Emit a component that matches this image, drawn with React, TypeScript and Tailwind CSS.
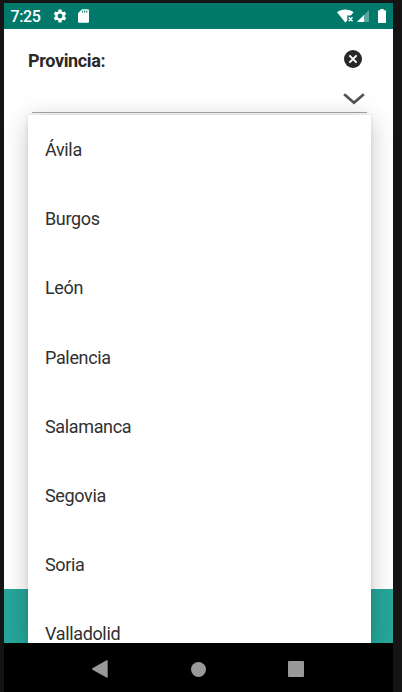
import React from 'react';

const provinces: string[] = ['Ávila', 'Burgos', 'León', 'Palencia', 'Salamanca', 'Segovia', 'Soria', 'Valladolid'];

function StatusBar() {
  return (
    <header className="flex h-[26px] shrink-0 items-center bg-[#00796b] pl-[6.5px] pr-[7px] text-white">
      <span className="w-[41px] pt-px text-[16px] font-medium leading-[25px] tracking-[-0.4px]">7:25</span>
      <svg className="h-4 w-4" viewBox="0 0 24 24" fill="currentColor">
        <path d="M19.14 12.94c.04-.3.06-.61.06-.94 0-.32-.02-.64-.07-.94l2.03-1.58c.18-.14.23-.41.12-.61l-1.92-3.32c-.12-.22-.37-.29-.59-.22l-2.39.96c-.5-.38-1.03-.7-1.62-.94l-.36-2.54c-.04-.24-.24-.41-.48-.41h-3.84c-.24 0-.43.17-.47.41l-.36 2.54c-.59.24-1.13.57-1.62.94l-2.39-.96c-.22-.08-.47 0-.59.22L2.740 8.870c-.12.21-.08.47.12.61l2.03 1.58c-.05.3-.09.63-.09.94s.02.64.07.94l-2.03 1.580c-.18.14-.23.41-.12.61l1.920 3.320c.12.22.37.29.59.22l2.390-.96c.5.38 1.030.7 1.620.94l.36 2.540c.05.24.24.41.48.41h3.840c.24 0 .44-.17.47-.41l.36-2.540c.59-.24 1.130-.56 1.620-.94l2.390.96c.22.08.47 0 .59-.22l1.920-3.320c.12-.22.07-.47-.12-.61l-2.010-1.580zM12 15.600c-1.980 0-3.600-1.620-3.600-3.600s1.620-3.600 3.600-3.600 3.600 1.620 3.600 3.600-1.620 3.600-3.600 3.600z" />
      </svg>
      <svg className="ml-[10.5px] h-[14px] w-[11px]" viewBox="0 0 11 14">
        <path d="M4 .3h5.800A1.200 1.200 0 0 1 11 1.500v11A1.200 1.200 0 0 1 9.800 13.700H1.200A1.200 1.200 0 0 1 0 12.500V4.300Z" fill="#fff" />
        <path d="M4.500 1.600v2.200M6.600 1.600v2.200M8.700 1.600v2.200" stroke="#00796b" strokeWidth="1.200" opacity=".75" />
      </svg>
      <div className="ml-auto flex items-center">
        <svg className="h-[14px] w-[17px]" viewBox="0 0 17 14">
          <path d="M0 3.300C4.500-.5 12-.5 16.600 3.300L13.800 6.600H10.300v5L8.300 13.500Z" fill="#fff" />
          <path d="m11.800 8.200 3.700 4M15.500 8.200l-3.700 4" stroke="#fff" strokeWidth="1.400" />
        </svg>
        <svg className="ml-[3px] h-[14px] w-[12px]" viewBox="0 0 12 14">
          <path d="M12 1v12H0Z" fill="#fff" fillOpacity=".35" />
          <path d="M7 6v7H0Z" fill="#fff" />
        </svg>
        <svg className="ml-[9px] h-[14px] w-2" viewBox="0 0 8 14">
          <path d="M2.300 0h3.400v1.300H7.300q.7 0 .7.700v11.300q0 .7-.7.700H.7q-.7 0-.7-.7V2q0-.7.700-.7h1.600Z" fill="#fff" />
        </svg>
      </div>
    </header>
  );
}

function ProvinceMenu() {
  return (
    <ul className="absolute left-6 top-[86px] h-[528px] w-[343px] bg-white pt-[0.4px] shadow-[0_5px_24px_rgba(0,0,0,0.22),0_0_4px_rgba(0,0,0,0.1)]">
      {provinces.map((name) => (
        <li key={name} className="flex h-[69.2px] items-center pl-[17px] text-[18px] leading-[20px] tracking-[-0.35px] text-[#303030]">
          {name}
        </li>
      ))}
    </ul>
  );
}

function NavigationBar() {
  return (
    <nav className="flex h-[49px] shrink-0 items-center bg-black pl-[88px] pt-[3px] text-[#999]">
      <svg className="h-[18px] w-4" viewBox="0 0 16 18" fill="currentColor">
        <path d="M.5 8.300 14.500.3q1.200-.5 1.200.6v16q0 1.100-1.200.6L.5 9.700q-.8-.7 0-1.400Z" />
      </svg>
      <span className="ml-[83px] h-[15px] w-[15px] rounded-full bg-[#999]" />
      <span className="ml-[82px] h-4 w-4 rounded-[1px] bg-[#999]" />
    </nav>
  );
}

export default function App() {
  return (
    <div className="h-[692px] w-[402px] overflow-hidden bg-[#141414] pl-1 pt-[3px] font-[Roboto,sans-serif]">
      <div className="flex h-[689px] w-[389px] flex-col">
        <StatusBar />
        <main className="relative flex h-[614px] shrink-0 flex-col overflow-hidden bg-white">
          <div className="flex h-[60px] items-center justify-between pl-6 pr-[31px]">
            <h1 className="pt-[3px] text-[18px] font-bold tracking-[-0.35px] text-[#292929]">Provincia:</h1>
            <svg className="h-[18px] w-[18px]" viewBox="0 0 18 18">
              <circle cx="9" cy="9" r="9" fill="#282828" />
              <path d="m5.400 5.400 7.200 7.200M12.600 5.400l-7.200 7.200" stroke="#fff" strokeWidth="2" />
            </svg>
          </div>
          <div className="ml-7 mr-[26px] flex h-6 items-start justify-end border-b border-[#aaa] pr-[2px]">
            <svg className="mt-[3.5px] h-3 w-[22px]" viewBox="0 0 22 12">
              <path d="m1.200 1.300 9.800 8.400 9.800-8.400" fill="none" stroke="#535353" strokeWidth="2.800" />
            </svg>
          </div>
          <div className="mt-auto h-[54px] bg-[#26a69a]" />
          <ProvinceMenu />
        </main>
        <NavigationBar />
      </div>
    </div>
  );
}
